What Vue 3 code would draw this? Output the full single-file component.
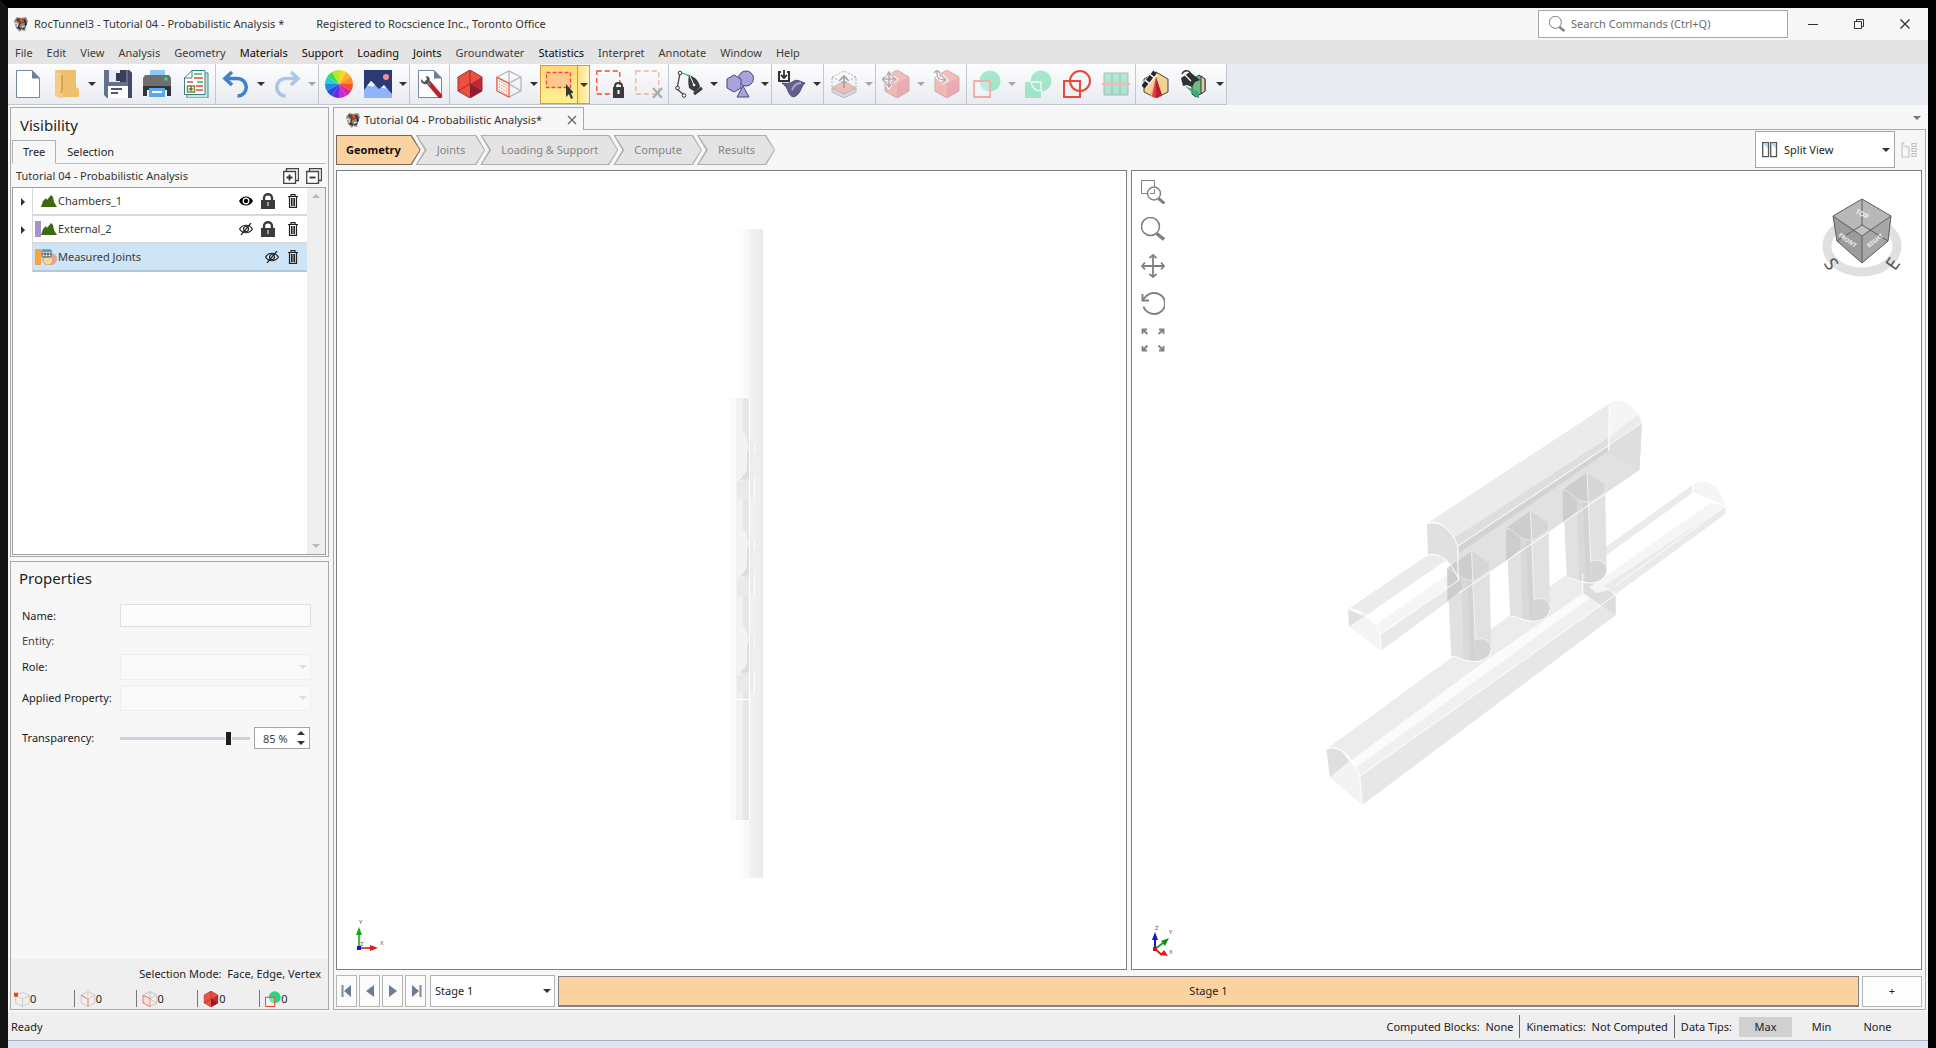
<script setup>
import { ref } from 'vue'

const menus = ['File', 'Edit', 'View', 'Analysis', 'Geometry', 'Materials', 'Support', 'Loading', 'Joints', 'Groundwater', 'Statistics', 'Interpret', 'Annotate', 'Window', 'Help']
const strongMenus = ['Materials', 'Support', 'Loading', 'Joints', 'Statistics']

const groups = [
  [{ id: 'new' }, { id: 'open', menu: true }, { id: 'save' }, { id: 'print' }, { id: 'report' }],
  [{ id: 'undo', menu: true }, { id: 'redo', menu: true, off: true }],
  [{ id: 'wheel' }, { id: 'picture', menu: true }],
  [{ id: 'settings' }],
  [{ id: 'cube' }, { id: 'wirecube', menu: true }, { id: 'select', menu: true, on: true }, { id: 'selectlock' }, { id: 'selectclear', off: true }],
  [{ id: 'polyline', menu: true }, { id: 'shapes', menu: true }],
  [{ id: 'surface', menu: true }],
  [{ id: 'extrude', menu: true, off: true }],
  [{ id: 'movecube', menu: true, off: true }, { id: 'rotatecube', off: true }],
  [{ id: 'boolean', menu: true, off: true }, { id: 'union', off: true }, { id: 'intersect' }, { id: 'divide', off: true }],
  [{ id: 'paint' }, { id: 'fill', menu: true }]
]

const tree = [
  { name: 'Chambers_1', visible: true, lock: true, expand: true, swatch: '', icon: 'mesh' },
  { name: 'External_2', visible: false, lock: true, expand: true, swatch: '#a892c6', icon: 'mesh' },
  { name: 'Measured Joints', visible: false, lock: false, expand: false, swatch: '#f5a640', icon: 'joint', selected: true }
]

const steps = ['Geometry', 'Joints', 'Loading & Support', 'Compute', 'Results']
const counters = ['c-vertex', 'c-edge', 'c-face', 'cube', 'boolean']
const players = [
  { id: 'first', label: 'First stage' },
  { id: 'prev', label: 'Previous stage' },
  { id: 'next', label: 'Next stage' },
  { id: 'last', label: 'Last stage' }
]
const viewTools = ['zoomwin', 'zoom', 'pan', 'rotate', 'fit']
const wedges = ['#ffd21f', '#ffb02e', '#ff8a2a', '#f4502c', '#e0239a', '#c02be0', '#6a2be0', '#2b48d8', '#1f8ae6', '#25d0d8', '#3ddc5a', '#b4e62a']
const wedgePath = 'M14 14 L14 0 A14 14 0 0 1 21 1.9 Z'
const columns = [
  { t: 'translate(0 0)' },
  { t: 'translate(177 -121)' },
  { t: 'translate(347 -236)' }
]
const transparency = ref(85)
const tips = ['Max', 'Min', 'None']
</script>

<template>
  <div class="desktop">
    <svg class="sprite" aria-hidden="true">
      <symbol id="new" viewBox="0 0 28 28"><path d="M2.500 .5H18l7.500 7.500v19.500h-23z" fill="#fff" stroke="#7388a5" /><path d="M18 0l8 8.500h-8z" fill="#6c7f9b" /></symbol>
      <symbol id="open" viewBox="0 0 28 28"><path d="M3 0h20v17l3 2v8H8z" fill="#efc06c" /><path d="M2 0l8 5v24l-8-3z" fill="#f4cd83" /><path d="M9 5v15l-1 3" stroke="#cf9440" stroke-width="1.500" fill="none" /></symbol>
      <symbol id="save" viewBox="0 0 28 28"><path d="M1 0h24l3 3v25H3l-3-3V0z" fill="#63718f" /><path d="M24 0h1l3 3v25h-4z" fill="#454b66" /><path d="M5 0h17v12H5z" fill="#3a3e5b" /><path d="M5 0h11v12H5z" fill="#e5eaf4" /><path d="M12 3h4v8h-4z" fill="#343955" /><path d="M4 16h20v12H4z" fill="#fff" /><path d="M7 19h11M7 23h7" stroke="#4c5675" stroke-width="2" /></symbol>
      <symbol id="print" viewBox="0 0 28 28"><path d="M7 0h15v8H7z" fill="#8ec8f8" /><path d="M2 5h24l2 3v17h-4v-7H4v7H0V8z" fill="#6f6f71" /><path d="M0 16h28v10h-4v-6H4v6H0z" fill="#343537" /><path d="M6 18h16v9H6z" fill="#58aaf0" /><path d="M9 22h10" stroke="#fff" stroke-width="2" /><circle cx="23" cy="9" r="1.800" fill="#2ddf7c" /></symbol>
      <symbol id="report" viewBox="0 0 28 28"><path d="M10 3h16v25H5V9z" fill="#bfe6e3" stroke="#3f8d91" /><path d="M10 .5h13v24H2.500V8z" fill="#fff" stroke="#3a7c84" /><path d="M2 8h8V0" fill="none" stroke="#3a7c84" /><path d="M12 4h8M15 12h6" stroke="#2dbd52" stroke-width="1.400" /><path d="M12 8h9M5 12h6M14 16h7M14 20h7" stroke="#e8443b" stroke-width="1.400" /><path d="M5.500 16h7v6h-7z" fill="#fff" stroke="#7d8b22" stroke-width="1.500" /><path d="M9 16v5M7 19h4" stroke="#334" /></symbol>
      <symbol id="undo" viewBox="0 0 28 28"><path d="M10 2L3 8.500l7 6.500M3 8.500h12.500a8.500 8.500 0 0 1 0 17.500" fill="none" stroke="#3f82c8" stroke-width="3.600" /></symbol>
      <symbol id="redo" viewBox="0 0 28 28"><path d="M18 2l7 6.500-7 6.500M25 8.500H12.500a8.500 8.500 0 0 0 0 17.500" fill="none" stroke="#3f82c8" stroke-width="3.600" /></symbol>
      <symbol id="wheel" viewBox="0 0 28 28"><path v-for="(c, i) in wedges" :key="c" :d="wedgePath" :fill="c" :transform="`rotate(${i * 30} 14 14)`" /></symbol>
      <symbol id="picture" viewBox="0 0 28 28"><path d="M0 0h28v28H0z" fill="#2c3b73" /><path d="M0 20L7 11l8 8 5-4 8 9v4H0z" fill="#90b4f8" /><path d="M3 16l4-5 4 4-3 2-1-1zM17 18l3-3 3 4-3-1z" fill="#f1f5ff" /><circle cx="22" cy="7" r="3" fill="#f48f9c" /></symbol>
      <symbol id="settings" viewBox="0 0 28 28"><path d="M2.500 .5H18l7.500 7.500v19.500h-23z" fill="#fff" stroke="#7388a5" /><path d="M18 0l8 8.500h-8z" fill="#6c7f9b" /><path d="M13 13l11 13" stroke="#b7242c" stroke-width="4.500" stroke-linecap="round" /><path d="M10 10l4 5" stroke="#777" stroke-width="3" /><path d="M5 9l3 3 3-2-1-4c4 0 5 4 2 7s-8 0-7-4z" fill="#555" /></symbol>
      <symbol id="cube" viewBox="0 0 28 28"><path d="M14 0l12 7v14l-12 7L2 21V7z" fill="#ee4f3e" /><path d="M14 14L26 7v14l-12 7z" fill="#c12a38" /><path d="M14 14L26 21 14 28z" fill="#8f1c31" /><path d="M14 0l12 7v14l-12 7L2 21V7zM14 0v14L2 21M14 14l12 7" fill="none" stroke="#8c2731" stroke-width=".9" /></symbol>
      <symbol id="wirecube" viewBox="0 0 28 28"><path d="M14 1l12 6v14l-12 6L2 21V7zM14 1v13M2 21l12-7 12 7M2 7l12 6 12-6" fill="none" stroke="#aeb1b5" stroke-width="1.200" /><path d="M2 7.500l12 6V27L2 21z" fill="#fff1ee" stroke="#ef5540" stroke-width="1.200" /><path d="M4 11l9 5M4 14l9 5M4 17l9 5M4 20l9 5" stroke="#ef5540" stroke-dasharray="1 1.600" /></symbol>
      <symbol id="select" viewBox="0 0 28 28"><path d="M1.500 1.500h24v15h-24z" fill="#ffc98c" stroke="#f24a2e" stroke-width="1.300" stroke-dasharray="4 2" /><path d="M21 13v13l3-3 2 5 2-1-2-5h3z" fill="#35363a" /></symbol>
      <symbol id="selectlock" viewBox="0 0 28 28"><path d="M.8 1h23v23H.8z" fill="none" stroke="#f24a2e" stroke-width="1.300" stroke-dasharray="5 3" /><path d="M17 17h11v11H17z" fill="#3a3b3e" /><path d="M19 18v-2c0-4 7-4 7 0v2" fill="none" stroke="#3a3b3e" stroke-width="2" /><path d="M22.500 20v4" stroke="#fff" stroke-width="2" /></symbol>
      <symbol id="selectclear" viewBox="0 0 28 28"><path d="M.8 1h23v23H.8z" fill="none" stroke="#f24a2e" stroke-width="1.300" stroke-dasharray="5 3" /><path d="M18 18l9 10M27 18l-9 10" stroke="#444" stroke-width="2.200" /></symbol>
      <symbol id="polyline" viewBox="0 0 28 28"><path d="M5 3L2 19l7 6" fill="none" stroke="#444" stroke-width="1.300" /><path d="M5 3c5 0 6 1 9 3" fill="none" stroke="#35d67f" stroke-width="1.600" /><g fill="#fff" stroke="#333"><circle cx="5" cy="3" r="1.800" /><circle cx="2.500" cy="18" r="1.800" /><circle cx="9" cy="25.500" r="1.800" /></g><path d="M14 5c6 2 10 6 11 12l-5 5-6-4c-1-5-1-8 0-13z" fill="#3a3c42" /><path d="M15 6l4 9" stroke="#fff" /><circle cx="19" cy="15" r="1.300" fill="#fff" /><path d="M19 24l8-6" stroke="#3a3c42" stroke-width="3" /></symbol>
      <symbol id="shapes" viewBox="0 0 28 28"><g fill="#a6a4da" stroke="#4a4878"><circle cx="20" cy="8.500" r="7.500" /><path d="M8 5l7 4v9l-7 4-7-4V9z" /><path d="M17 16l6 11H11z" /></g></symbol>
      <symbol id="surface" viewBox="0 0 28 28"><path d="M4 13c6 1 9 0 12-2 4-2 6 1 11 2-4 3-4 9-8 12-3 3-6 2-8-2-2-5-3-7-7-10z" fill="#62618e" stroke="#494875" /><path d="M14 20c2-5 5-7 9-7" fill="none" stroke="#aaa8d0" stroke-width="2" /><path d="M3 2H1v9h10V2H9" fill="none" stroke="#333" stroke-width="2" /><path d="M6 0v8M3 5l3 3 3-3" fill="none" stroke="#333" stroke-width="1.800" /></symbol>
      <symbol id="extrude" viewBox="0 0 28 28"><path d="M2 18l12 6 12-6v4l-12 6-12-6z" fill="#aeb4d8" stroke="#667" /><path d="M14 11l12 7-12 6-12-6z" fill="#ef6d5c" stroke="#766" /><path d="M2 17V7l12-6 12 6v10M2 7l12 6 12-6" fill="none" stroke="#444" stroke-dasharray="2 1.500" /><path d="M14 18V6M10 10l4-4 4 4" fill="none" stroke="#333" stroke-width="1.800" /></symbol>
      <symbol id="movecube" viewBox="0 0 28 28"><path d="M15 0l12 7v14l-12 7L3 21V7z" fill="#ee6558" stroke="#8a4a48" /><path d="M15 14l12-7v14l-12 7z" fill="#d4344a" opacity=".7" /><path d="M7 3v13M0 9h14M5 5l2-3 2 3M5 14l2 3 2-3M3 7L0 9l3 3M11 7l3 2-3 3" fill="none" stroke="#fff" stroke-width="3.500" /><path d="M7 3v13M0 9h14M5 5l2-3 2 3M5 14l2 3 2-3M3 7L0 9l3 3M11 7l3 2-3 3" fill="none" stroke="#444" stroke-width="1.500" /></symbol>
      <symbol id="rotatecube" viewBox="0 0 28 28"><path d="M14 0l12 7v14l-12 7L2 21V7z" fill="#ee6558" stroke="#8a4a48" /><path d="M14 14l12-7v14l-12 7z" fill="#d4344a" opacity=".7" /><path d="M4 1v3c0 5 3 6 8 6M1 3l3-3 3 3M9 6l4 4-4 3" fill="none" stroke="#fff" stroke-width="4" /><path d="M4 1v3c0 5 3 6 8 6M1 3l3-3 3 3M9 6l4 4-4 3" fill="none" stroke="#444" stroke-width="1.500" /></symbol>
      <symbol id="boolean" viewBox="0 0 28 28"><circle cx="17" cy="11" r="10.500" fill="#2bd487" /><path d="M1 11h16v16H1z" fill="#fff" fill-opacity=".35" stroke="#ee4b35" stroke-width="1.800" /></symbol>
      <symbol id="union" viewBox="0 0 28 28"><circle cx="17" cy="11" r="10.500" fill="#2bd487" /><path d="M1 12h16v16H1z" fill="#2bd487" /><path d="M17 21V12H7a10 10 0 0 0 10 9z" fill="none" stroke="#fff" stroke-width="1.400" /></symbol>
      <symbol id="intersect" viewBox="0 0 28 28"><circle cx="17" cy="11" r="10" fill="none" stroke="#e8483a" stroke-width="2" /><path d="M1 11h16v16H1z" fill="none" stroke="#e8483a" stroke-width="2" /></symbol>
      <symbol id="divide" viewBox="0 0 28 28"><path d="M2 3h24v22H2z" fill="#45d894" stroke="#557" /><path d="M10 3v22M18 3v22" stroke="#557" /><path d="M0 14h28" stroke="#ef6650" stroke-width="2.600" /></symbol>
      <symbol id="paint" viewBox="0 0 28 28"><path d="M14 2l12 7v13l-12 6-12-6V9z" fill="#f3d292" stroke="#444" /><path d="M14 7l-6 18 6 3z" fill="#f2b0a0" /><path d="M14 7l-4 19 4 2 6-2z" fill="#ef3a34" /><path d="M14 7l6 18-6 3z" fill="#b81f30" /><path d="M2 16L13 3" stroke="#fff" stroke-width="6" /><path d="M1 17L13 2" stroke="#26272a" stroke-width="4.500" stroke-dasharray="6 1.500" /></symbol>
      <symbol id="fill" viewBox="3 0 28 28"><path d="M14 10l7-5 6 4v12l-9 6-4-3z" fill="#6fb984" stroke="#333" /><path d="M23 6l4 3v12l-4 3z" fill="#dcd0a4" stroke="#333" /><path d="M7 16l14 6v7z" fill="#3aad7b" /><path d="M3 8l9-6 10 8-5 2-3 5-5-2-4 1z" fill="#303133" /><path d="M4 4c2-5 8-4 9 1" fill="none" stroke="#333" stroke-width="1.500" /><path d="M7 5l6 6" stroke="#fff" stroke-width="1.200" /></symbol>

      <symbol id="logo" viewBox="0 0 16 16"><path d="M1 5l3-4 4 1 5-1 2 4-2 5-1 5-4-1-1 2-4-4-1-4z" fill="#8d8a86" /><path d="M4 3l3 3-2 5 3 2M11 3l2 5-3 5" stroke="#33302e" stroke-width="2" fill="none" /><path d="M2 7l3 1-1 3M9 11l3-1" stroke="#dad8d6" stroke-width="1.500" fill="none" /><path d="M6 2l4 1 1 4-4 1-2-2z" fill="#a63b1c" /><path d="M7 3l2 1v2" stroke="#e57a4c" fill="none" /></symbol>
      <symbol id="mesh" viewBox="0 0 16 12"><path d="M0 12L2 6l3-3 1 2 4-5 2 2 1 5 3 5z" fill="#3b6a12" /></symbol>
      <symbol id="joint" viewBox="0 0 16 16"><circle cx="10" cy="10" r="6" fill="#e6a0a6" /><circle cx="7" cy="11" r="5" fill="#f1d6a0" stroke="#c9a46d" /><path d="M1 1h9v7H1z" fill="#fff" stroke="#555" /><path d="M1 1h9v2H1z" fill="#4e9edb" /><path d="M1 5h9M4 3v5M7 3v5" stroke="#444" /></symbol>
      <symbol id="eye" viewBox="0 0 14 10"><path d="M0 5c3-6 11-6 14 0-3 6-11 6-14 0z" fill="#000" /><circle cx="7" cy="5" r="3.400" fill="#fff" /><circle cx="7" cy="5" r="2.200" fill="#000" /></symbol>
      <symbol id="eyeoff" viewBox="0 0 14 12"><path d="M.6 6c3-5 10-5 12.800 0-3 5-10 5-12.800 0z" fill="none" stroke="#222" stroke-width="1.200" /><circle cx="7" cy="6" r="2.500" fill="none" stroke="#222" stroke-width="1.200" /><path d="M2 12L12 0" stroke="#222" stroke-width="1.200" /></symbol>
      <symbol id="lock" viewBox="0 0 14 16"><path d="M0 7h14v9H0z" fill="#3b3b3b" /><path d="M3 8V5c0-5 8-5 8 0v3" fill="none" stroke="#3b3b3b" stroke-width="2.400" /><path d="M7 9v4" stroke="#bbb" stroke-width="1.600" /></symbol>
      <symbol id="trash" viewBox="0 0 10 14"><path d="M1.500 3v10.400h7V3M0 2.500h10M3 2V.6h4V2" fill="none" stroke="#222" stroke-width="1.200" /><path d="M3.500 4v8M5 4v8M6.500 4v8" stroke="#222" stroke-width="1.100" /></symbol>
      <symbol id="expandall" viewBox="0 0 16 16"><path d="M3.500 3V.7h12v11.800H13" fill="none" stroke="#444" stroke-width="1.300" /><path d="M.7 3.500h11.800v12H.7z" fill="#fff" stroke="#444" stroke-width="1.300" /><path d="M3.500 9.500h6M6.500 6.500v6" stroke="#333" stroke-width="1.800" /></symbol>
      <symbol id="collapseall" viewBox="0 0 16 16"><path d="M3.500 3V.7h12v11.800H13" fill="none" stroke="#444" stroke-width="1.300" /><path d="M.7 3.500h11.800v12H.7z" fill="#fff" stroke="#444" stroke-width="1.300" /><path d="M3.500 9.500h6" stroke="#333" stroke-width="1.800" /></symbol>
      <symbol id="c-vertex" viewBox="0 0 28 28"><path d="M15 2l12 6v13l-12 6L3 21V8zM15 27V14L3 8M15 14l12-6" fill="none" stroke="#c6c6c6" stroke-width="1.500" /><path d="M0 3h7v7H0z" fill="#f04418" /></symbol>
      <symbol id="c-edge" viewBox="0 0 28 28"><path d="M14 1l12 6v14l-12 6L2 21V7zM14 1v8M14 14l12-7" fill="none" stroke="#c6c6c6" stroke-width="1.500" /><path d="M2 7l12 7v13" fill="none" stroke="#f0876e" stroke-width="2" /></symbol>
      <symbol id="c-face" viewBox="0 0 28 28"><use href="#wirecube" /></symbol>
      <symbol id="first" viewBox="0 0 12 12"><path d="M1.500 0v12" stroke="#7a8ba0" stroke-width="2" /><path d="M10 0v12L3 6z" fill="#6b7d93" /></symbol>
      <symbol id="prev" viewBox="0 0 12 12"><path d="M10 0v12L2 6z" fill="#6b7d93" /></symbol>
      <symbol id="next" viewBox="0 0 12 12"><path d="M2 0v12l8-6z" fill="#6b7d93" /></symbol>
      <symbol id="last" viewBox="0 0 12 12"><path d="M2 0v12l7-6z" fill="#6b7d93" /><path d="M10.500 0v12" stroke="#7a8ba0" stroke-width="2" /></symbol>
      <symbol id="zoomwin" viewBox="0 0 24 24"><path d="M7 13.500H.5V.5h13V7M9 13.500h4.500V9" fill="none" stroke="#808080" /><circle cx="13" cy="13.500" r="6.500" fill="none" stroke="#808080" stroke-width="1.400" /><path d="M17.500 18.500l6 5" stroke="#808080" stroke-width="3" /></symbol>
      <symbol id="zoom" viewBox="0 0 24 24"><circle cx="9.500" cy="9.500" r="9" fill="none" stroke="#808080" stroke-width="1.500" /><path d="M15.500 16.500l7.500 6" stroke="#808080" stroke-width="3.500" /></symbol>
      <symbol id="pan" viewBox="0 0 24 24"><path d="M12 1v22M1 12h22M8.500 4L12 1l3.500 3M8.500 20l3.500 3 3.500-3M4 8.500L1 12l3 3.500M20 8.500l3 3.500-3 3.500" fill="none" stroke="#808080" stroke-width="1.800" /></symbol>
      <symbol id="rotate" viewBox="0 0 24 24"><path d="M2.500 15.500A11 10.500 0 1 0 4 6.500L1.500 9" fill="none" stroke="#808080" stroke-width="1.900" /><path d="M1.500 3v6.500H8" fill="none" stroke="#808080" stroke-width="1.900" /></symbol>
      <symbol id="fit" viewBox="0 0 24 24"><g fill="none" stroke="#808080" stroke-width="1.800"><path d="M1.500 6V1.500H6M2 2l4.500 4" /><path d="M18 1.500h4.500V6M22 2l-4.500 4" /><path d="M1.500 18v4.500H6M2 22l4.500-4.500" /><path d="M18 22.500h4.500V18M22 22l-4.500-4.500" /></g></symbol>
    </svg>

    <main class="window">
      <header class="title">
        <svg class="i16"><use href="#logo" /></svg>
        <h1>RocTunnel3 - Tutorial 04 - Probabilistic Analysis *</h1>
        <span class="registered">Registered to Rocscience Inc., Toronto Office</span>
        <label class="search">
          <svg class="i16"><use href="#zoom" /></svg>
          <input type="text" placeholder="Search Commands (Ctrl+Q)" aria-label="Search Commands">
        </label>
        <button class="win" aria-label="Minimize"><svg width="12" height="12"><path d="M1 6.500h10" stroke="#333" /></svg></button>
        <button class="win" aria-label="Restore"><svg width="12" height="12"><path d="M1.500 3.500h7v7h-7zM3.500 3.500v-2h7v7h-2" fill="none" stroke="#333" /></svg></button>
        <button class="win" aria-label="Close"><svg width="12" height="12"><path d="M1.500 1.500l9 9M10.500 1.500l-9 9" stroke="#333" stroke-width="1.400" /></svg></button>
      </header>

      <nav class="menubar">
        <button v-for="m in menus" :key="m" :class="{ strong: strongMenus.includes(m) }">{{ m }}</button>
      </nav>

      <div class="toolbar" role="toolbar" aria-label="Main tools">
        <div v-for="(g, gi) in groups" :key="gi" class="group">
          <div v-for="t in g" :key="t.id" class="tool" :class="{ on: t.on, off: t.off }">
            <button class="tbtn" :aria-label="t.id"><svg class="i28"><use :href="'#' + t.id" /></svg></button>
            <button v-if="t.menu" class="drop" :aria-label="t.id + ' options'"><i class="caret"></i></button>
          </div>
        </div>
      </div>

      <div class="work">
        <aside class="side">
          <section class="panel visibility">
            <h2>Visibility</h2>
            <div class="tabs"><button class="tab current">Tree</button><button class="tab">Selection</button></div>
            <div class="treehead">
              <span>Tutorial 04 - Probabilistic Analysis</span>
              <button aria-label="Expand all"><svg class="i16"><use href="#expandall" /></svg></button>
              <button aria-label="Collapse all"><svg class="i16"><use href="#collapseall" /></svg></button>
            </div>
            <div class="treebox">
              <ul>
                <li v-for="n in tree" :key="n.name">
                  <button class="twist" :aria-label="'Expand ' + n.name"><svg v-if="n.expand" width="4" height="8"><path d="M0 0l4 4-4 4z" fill="#333" /></svg></button>
                  <div class="node" :class="{ picked: n.selected }">
                    <i class="swatch" :style="{ background: n.swatch }"></i>
                    <svg class="i16 nodeicon"><use :href="'#' + n.icon" /></svg>
                    <span>{{ n.name }}</span>
                    <button aria-label="Toggle visibility"><svg class="eye"><use :href="n.visible ? '#eye' : '#eyeoff'" /></svg></button>
                    <button v-if="n.lock" class="locker" aria-label="Lock"><svg class="i16"><use href="#lock" /></svg></button>
                    <button class="bin" aria-label="Delete"><svg class="i14"><use href="#trash" /></svg></button>
                  </div>
                </li>
              </ul>
              <div class="scroll"><i class="caret up"></i><i class="caret"></i></div>
            </div>
          </section>

          <section class="panel properties">
            <h2>Properties</h2>
            <form @submit.prevent>
              <label for="p-name">Name:</label><input id="p-name" type="text" disabled>
              <span class="entity">Entity:</span><span></span>
              <label for="p-role">Role:</label><span class="combo"><select id="p-role" disabled></select><i class="caret"></i></span>
              <label for="p-prop">Applied Property:</label><span class="combo"><select id="p-prop" disabled></select><i class="caret"></i></span>
              <label for="p-trans" class="tall">Transparency:</label>
              <span class="range tall">
                <input id="p-trans" v-model="transparency" type="range" min="0" max="100">
                <span class="spin">
                  <input type="text" :value="transparency + ' %'" aria-label="Transparency percent">
                  <span class="arrows"><i class="caret up"></i><i class="caret"></i></span>
                </span>
              </span>
            </form>
            <footer class="mode">
              <p>Selection Mode:&nbsp; Face, Edge, Vertex</p>
              <div class="counters"><span v-for="c in counters" :key="c"><svg class="i16"><use :href="'#' + c" /></svg>0</span></div>
            </footer>
          </section>
        </aside>

        <section class="doc">
          <div class="doctabs">
            <div class="doctab">
              <svg class="i16"><use href="#logo" /></svg><span>Tutorial 04 - Probabilistic Analysis*</span>
              <button aria-label="Close tab"><svg width="10" height="10"><path d="M1 1l8 8M9 1L1 9" stroke="#666" stroke-width="1.300" /></svg></button>
            </div>
            <div class="docrest"><i class="caret"></i></div>
          </div>
          <div class="docbody">
            <div class="flow">
              <ol>
                <li v-for="(s, i) in steps" :key="s"><button :class="{ active: i === 0 }"><span>{{ s }}</span></button></li>
              </ol>
              <label class="split">
                <svg width="16" height="16" viewBox="0 0 16 16"><path d="M.7 .7h5.800v14H.7zM8.700 .7h5.800v14H8.700z" fill="#fff" stroke="#555" stroke-width="1.300" /><path d="M1.500 1.500h4.500v5zM9.500 1.500H14v5z" fill="#a9d5f0" /></svg>
                <select aria-label="View layout"><option>Split View</option></select><i class="caret"></i>
              </label>
              <button class="layout" aria-label="Layout options"><svg width="16" height="16" viewBox="0 0 16 16"><path d="M1 5v10h7V5H5M1 1v3h5M3 0L1 2M11 1.500h4v3h-4zM11 6.500h4v3h-4zM11 11.500h4v3h-4z" fill="none" stroke="#c3c3c3" stroke-width="1.200" /></svg></button>
            </div>

            <div class="views">
              <div class="view">
                <svg class="scene" viewBox="0 0 790 798">
                  <g shape-rendering="crispEdges">
                    <path d="M403 58h5v649h-5z" fill="#fcfcfc" /><path d="M408 58h5v649h-5z" fill="#f8f8f8" /><path d="M413 58h6v649h-6z" fill="#f1f1f1" /><path d="M419 58h5v649h-5z" fill="#eeeeee" /><path d="M424 58h3v649h-3z" fill="#eaeaea" />
                    <path d="M393 227h7v422h-7z" fill="#fafafa" /><path d="M400 227h7v422h-7z" fill="#f1f1f1" /><path d="M407 227h6v422h-6z" fill="#e6e6e6" />
                    <g v-for="y in [262, 359, 456]" :key="y"><path :d="`M401 ${y}h7c5 8 5 32 1 40l-8 8z`" fill="#f3f3f3" /><path :d="`M411 ${y + 18}v20l-8 9 8 -2h2v-27z`" fill="#dddddd" /><path :d="`M401 ${y + 48}h12v18h-12z`" fill="#eaeaea" /><path :d="`M413 ${y}l5 14v50h-5z`" fill="#ededed" /><path :d="`M418 ${y + 11}v8M418 ${y + 44}v22`" stroke="#fff" /></g>
                    <path d="M393 529h20M413.500 227v422M393 226.500h20M393 649.500h20" stroke="#fff" fill="none" />
                  </g>
                </svg>
                <svg class="triad" width="40" height="40" viewBox="0 0 40 40"><path d="M6 33V15" stroke="#1aa51f" stroke-width="1.600" /><path d="M6 11l3 8H3z" fill="#15a51a" /><path d="M6 32h13" stroke="#e01b1b" stroke-width="1.600" /><path d="M25 32l-8-3v6z" fill="#e01b1b" /><path d="M4 30h4v4H4z" fill="#1414d2" /><g font-size="6" fill="#555"><text x="6" y="8">Y</text><text x="27" y="29">X</text><text x="7" y="30">Z</text></g></svg>
              </div>
              <div class="view">
                <svg class="scene" viewBox="0 0 790 798">
                  <g transform="translate(168 209) scale(.33333)" stroke-width="3">
                    <path d="M382 430L930 70 928 195 475 495C450 445 415 420 382 430z" fill="#ebebeb" />
                    <path d="M930 70C970 45 1005 75 1028 128L928 195z" fill="#f5f5f5" />
                    <path d="M463 474L928 172V205L475 510z" fill="#dedede" />
                    <path d="M928 172L1018 102 1028 128 928 200z" fill="#ebebeb" />
                    <path d="M475 498L1028 128 1020 272 478 640z" fill="#e1e1e1" />
                    <path d="M475 498L925 200V215L478 520z" fill="#d3d3d3" />
                    <path d="M925 215L930 190 1028 128 1020 272z" fill="#dedede" />
                    <path d="M382 432C420 420 455 450 475 498L478 600C460 545 425 515 385 525z" fill="#e0e0e0" />
                    <path d="M145 688L385 525C400 522 425 525 440 540L195 710C180 695 165 684 145 688z" fill="#ebebeb" />
                    <path d="M240 765L445 625 478 600V640L245 812z" fill="#e9e9e9" />
                    <path d="M222 738L460 573 478 600 240 765z" fill="#f5f5f5" />
                    <path d="M145 688L195 710 148 740z" fill="#e0e0e0" /><path d="M148 740L195 710C220 725 235 745 240 765L245 812z" fill="#f4f4f4" />
                    <path d="M80 1108L460 830 800 585 850 580 950 650V705L188 1275 180 1190C155 1130 120 1090 80 1108z" fill="#ececec" />
                    <path d="M150 1145L520 870 850 640 890 620 905 632 165 1168z" fill="#fbfbfb" />
                    <path d="M167 1165L905 630 925 620 948 645 180 1190z" fill="#f0f0f0" />
                    <path d="M180 1190L948 645V705L188 1275z" fill="#e7e7e7" />
                    <path d="M850 580L948 645V705L850 638z" fill="#dddddd" />
                    <path d="M80 1108C120 1095 130 1120 150 1145L90 1193z" fill="#dfdfdf" /><path d="M90 1193L150 1145C165 1160 175 1175 180 1190L188 1275z" fill="#f3f3f3" />
                    <path d="M852 548L1180 315V338L852 575z" fill="#ebebeb" />
                    <path d="M870 622L1235 368 1278 378 950 625 890 640z" fill="#f5f5f5" />
                    <path d="M915 618L1278 378V402L950 642z" fill="#eaeaea" />
                    <path d="M1180 315C1220 285 1265 320 1278 378L1180 335z" fill="#f5f5f5" />
                    <g v-for="c in columns" :key="c.t" :transform="c.t">
                      <path d="M443 565L516 513 570 550 575 815C560 845 520 850 490 838L455 830z" fill="#e1e1e1" />
                      <path d="M443 565L516 513 520 600 443 665z" fill="#cdcdcd" />
                      <path d="M516 513L570 550V570L520 602z" fill="#d6d6d6" />
                      <path d="M485 595L503 600 512 842 492 838z" fill="#d9d9d9" />
                      <path d="M503 600L520 602 527 845 512 842z" fill="#d3d3d3" />
                      <path d="M527 780C560 765 575 790 575 815 560 845 540 845 527 845z" fill="#d5d5d5" />
                      <path d="M516 513L527 780C555 768 575 785 575 805" fill="none" stroke="#f1f1f1" />
                      <path d="M443 565C470 570 475 600 520 602 550 600 575 580 570 550" fill="none" stroke="#e6e6e6" />
                      <path d="M455 830C480 828 485 845 530 845 560 842 575 825 575 808" fill="none" stroke="#fff" />
                    </g>
                    <g fill="none" stroke="#fff"><path d="M382 430C420 415 455 450 475 498V570L478 600C455 545 420 515 385 525M475 498L1028 128M930 70L928 212M478 640L1020 272M145 688C185 682 235 725 240 765L245 812M240 765L478 600M80 1108C120 1090 165 1140 180 1190L188 1275M180 1190L948 645M850 580V640M1180 315V335M950 615L1278 378" /></g>
                  </g>
                </svg>
                <div class="viewtools"><button v-for="v in viewTools" :key="v" :aria-label="v"><svg class="i24"><use :href="'#' + v" /></svg></button></div>
                <svg class="compass" width="82" height="82" viewBox="0 0 82 82">
                  <ellipse cx="41" cy="48" rx="35" ry="26" fill="none" stroke="#e0e0e0" stroke-width="9" />
                  <path d="M41 1L70 18 67 43 41 65 16 43 12 18z" fill="#a4a4a4" />
                  <path d="M41 1L70 18 41 38 12 18z" fill="#b8b8b8" />
                  <path d="M12 18L41 38V65L16 43z" fill="#9c9c9c" /><path d="M41 38L70 18 67 43 41 65z" fill="#a6a6a6" />
                  <path d="M41 27l7 5-7 6-7-6z" fill="#c2c2c2" />
                  <path d="M41 1L70 18 67 43 41 65 16 43 12 18zM12 18L41 38 70 18M41 38V65M41 1V27M16 43L41 27 67 43" fill="none" stroke="#5f5f5f" />
                  <g fill="#eee" font-size="7" font-weight="700"><text transform="translate(34 15) rotate(28)">TOP</text><text transform="translate(17 38) rotate(36)" font-size="6">FRONT</text><text transform="translate(48 50) rotate(-38)" font-size="6">RIGHT</text></g>
                  <g fill="#555" font-size="18" text-anchor="middle"><text transform="translate(10 66) rotate(55) translate(0 6)">S</text><text transform="translate(72 66) rotate(-55) translate(0 6)">E</text></g>
                </svg>
                <svg class="triad" width="40" height="40" viewBox="0 0 40 40"><path d="M7 33V22" stroke="#1414d2" stroke-width="2" /><path d="M7 16l3 8H4z" fill="#1414d2" /><path d="M7 33l8-6" stroke="#1aa51f" stroke-width="2" /><path d="M21 22l-4 8-4-5z" fill="#158a1a" /><path d="M7 33l7 6" stroke="#e01b1b" stroke-width="2" /><path d="M20 40l-8-1 4-5z" fill="#e01b1b" /><path d="M5 31h4v4H5z" fill="#c11" /><g font-size="6" fill="#555"><text x="7" y="14">Z</text><text x="21" y="18">Y</text><text x="21" y="38">X</text></g></svg>
              </div>
            </div>

            <div class="stages">
              <button v-for="p in players" :key="p.id" class="player" :aria-label="p.label"><svg class="i12"><use :href="'#' + p.id" /></svg></button>
              <span class="combo stagepick"><select aria-label="Stage"><option>Stage 1</option></select><i class="caret"></i></span>
              <button class="stage">Stage 1</button>
              <button class="add" aria-label="Add stage">+</button>
            </div>
          </div>
        </section>
      </div>

      <footer class="status">
        <span class="ready">Ready</span>
        <span>Computed Blocks:&nbsp; None</span><i class="bar"></i>
        <span>Kinematics:&nbsp; Not Computed</span><i class="bar"></i>
        <span class="tipslabel">Data Tips:</span>
        <button v-for="t in tips" :key="t" :class="{ chosen: t === 'Max' }">{{ t }}</button>
      </footer>
    </main>
    <div class="taskbar"></div>
  </div>
</template>

<style>
body { background: #000; }
</style>

<style scoped>
* { box-sizing: border-box; }
.desktop { min-height: 100vh; display: flex; flex-direction: column; border-left: 8px solid #141414; border-right: 8px solid #000; border-top: 8px solid #000; font: 11px/16px "Noto Sans", "Open Sans", sans-serif; color: #1e1e1e; }
.sprite { position: absolute; width: 0; height: 0; }
button, input, select { font: inherit; color: inherit; margin: 0; padding: 0; border: 0; background: none; border-radius: 0; outline: 0; }
button { display: inline-flex; align-items: center; justify-content: center; }
select { appearance: none; opacity: 1; }
svg { display: block; flex: none; }
ul, ol { list-style: none; margin: 0; padding: 0; }
h1, h2, p { margin: 0; font-weight: 400; }
.i12 { width: 12px; height: 12px; }
.i14 { width: 14px; height: 14px; }
.i16 { width: 16px; height: 16px; }
.i24 { width: 24px; height: 24px; }
.i28 { width: 28px; height: 28px; }
.eye { width: 14px; height: 12px; }
.caret { display: block; flex: none; width: 0; height: 0; border: 4px solid transparent; border-top-color: #333; border-bottom: 0; }
.caret.up { transform: rotate(180deg); }

.window { flex: 1; display: flex; flex-direction: column; background: #f7f7f7; }
.title { display: flex; align-items: center; height: 32px; padding-left: 5px; }
.title h1 { font-size: 11px; margin-left: 5px; color: #333; }
.registered { margin-left: 32px; color: #333; }
.search { display: flex; align-items: center; gap: 6px; width: 250px; height: 28px; margin: 0 2px 0 auto; padding-left: 10px; border: 1px solid #a5a5a5; background: #fff; }
.search input { flex: 1; min-width: 0; }
.search input::placeholder { color: #6b6b6b; opacity: 1; }
.win { width: 46px; height: 32px; }
.menubar { display: flex; gap: 14px; height: 24px; padding: 2px 0 0 7px; background: #e4e4e4; color: #3c3c3c; }
.menubar .strong { color: #0a0a0a; }
.toolbar { display: flex; height: 41px; background: #e8ebf1; }
.group { display: flex; border-right: 1px solid #c3c7ce; border-bottom: 1px solid #c0c4cb; background: linear-gradient(#fdfdfe, #e8ebf0); }
.tool { display: flex; }
.tbtn { width: 39px; }
.drop { width: 12px; }
.off svg, .off .caret { opacity: .4; }
.on { height: 39px; margin-top: 1px; border: 1px solid #c9a13b; background: linear-gradient(#ffd97c, #ffe98c 60%, #fff08a); }
.on .tbtn { width: 36px; }
.on .drop { border-left: 1px solid #c9a13b; background: linear-gradient(90deg, #ffe07c, #fff4c8); }

.work { flex: 1; display: flex; gap: 4px; padding: 2px; }
.side { width: 319px; flex: none; display: flex; flex-direction: column; gap: 4px; }
.panel { border: 1px solid #a9a9a9; display: flex; flex-direction: column; }
.panel h2 { font-size: 15px; line-height: 20px; padding: 7px 8px 5px; color: #222; }
.visibility { flex: 1; padding: 0 2px 1px 1px; }
.properties { flex: 1; }
.panel.properties h2 { padding: 6px 8px; }
.tabs { display: flex; height: 24px; border-bottom: 1px solid #bdbdbd; }
.tab { padding: 0 11px; }
.tab.current { height: 24px; padding: 0 10px; border: 1px solid #b0b0b0; border-bottom-color: #f7f7f7; }
.treehead { display: flex; align-items: center; gap: 7px; height: 23px; padding: 0 4px; color: #333; }
.treehead span { flex: 1; }
.treebox { flex: 1; display: flex; border: 1px solid #a0a0a0; background: #fff; }
.treebox ul { flex: 1; }
.treebox li { display: flex; height: 28px; }
.twist { width: 19px; }
.node { flex: 1; display: flex; align-items: center; border-bottom: 2px solid #d9d9d9; border-left: 1px solid #d9d9d9; color: #3a3a3a; }
.node.picked { background: #cde5f7; border-bottom-color: #b3c9da; }
.node span { flex: 1; padding-left: 1px; }
.node button { width: 22px; height: 20px; }
.node .locker { margin-right: 4px; }
.node .bin { width: 20px; margin-right: 4px; }
.swatch { width: 6px; height: 16px; margin-left: 2px; }
.scroll { width: 18px; padding: 6px 5px; background: #efefef; display: flex; flex-direction: column; justify-content: space-between; }
.scroll .caret { border-top-color: #b9b9b9; }

form { flex: 1; display: grid; grid-template-columns: 98px 191px; grid-template-rows: 23px 27px 26px 5px 26px 16px 22px; align-items: center; align-content: start; padding: 10px 11px; white-space: nowrap; }
form label { color: #1a1a1a; }
form input[type=text] { height: 23px; border: 1px solid #dfdfdf; background: #fbfbfb; }
.entity { color: #444; }
form label[for=p-prop], form label[for=p-prop] + .combo { grid-row: 5; }
form .tall { grid-row: 7; }
.combo { display: flex; align-items: center; position: relative; height: 26px; }
.combo select { width: 100%; height: 100%; border: 1px solid #eee; background: #f9f9f9; }
.combo .caret { position: absolute; right: 4px; border-top-color: #ddd; }
.range { display: flex; align-items: center; gap: 4px; }
.range input[type=range] { appearance: none; width: 130px; height: 14px; margin: 0; background: linear-gradient(#cfcfe0, #cfcfe0) center / 100% 3px no-repeat; }
.range input[type=range]::-webkit-slider-thumb { appearance: none; width: 7px; height: 13px; background: #1c1c1c; border: 1px solid #f7f7f7; border-width: 0 1px; }
.spin { display: flex; width: 56px; height: 22px; border: 1px solid #a5a5a5; background: #fff; }
.spin input[type=text] { width: 42px; height: 20px; border: 0; background: none; padding-left: 8px; color: #444; }
.arrows { display: flex; flex-direction: column; gap: 6px; justify-content: center; }
.mode { height: 50px; padding: 7px 7px 0; background: #efefef; }
.mode p { text-align: right; }
.counters { display: flex; margin-left: -6px; padding-top: 8px; }
.counters span { width: 64px; display: flex; align-items: center; padding-left: 2px; height: 17px; }
.counters span + span { border-left: 1px solid #777; padding-left: 5px; }

.doc { flex: 1; min-width: 0; display: flex; flex-direction: column; }
.doctabs { display: flex; height: 23px; }
.doctab { display: flex; align-items: center; width: 251px; padding: 1px 6px 0 11px; border: 1px solid #a9a9a9; border-bottom: 0; color: #333; }
.doctab span { flex: 1; padding-left: 3px; }
.docrest { flex: 1; display: flex; align-items: center; justify-content: flex-end; padding-right: 5px; border-bottom: 1px solid #a9a9a9; }
.docrest .caret { border-top-color: #777; }
.docbody { flex: 1; display: flex; flex-direction: column; padding: 0 3px 2px 2px; border: 1px solid #a9a9a9; border-top: 0; }
.flow { display: flex; align-items: center; height: 40px; }
.flow ol { display: flex; flex: 1; }
.flow li + li { margin-left: -5px; }
.flow li button { position: relative; height: 30px; padding: 0 20px 0 21px; background: #adadad; color: #858585; clip-path: polygon(0 0, calc(100% - 9px) 0, 100% 50%, calc(100% - 9px) 100%, 0 100%, 9px 50%); }
.flow li button::before { content: ""; position: absolute; inset: 1px; background: #e4e4e4; clip-path: polygon(1px 0, calc(100% - 9px) 0, 100% 50%, calc(100% - 9px) 100%, 1px 100%, 10px 50%); }
.flow li span { position: relative; }
.flow li .active { padding-left: 10px; font-weight: 700; color: #111; background: #77695a; clip-path: polygon(0 0, calc(100% - 9px) 0, 100% 50%, calc(100% - 9px) 100%, 0 100%); }
.flow li .active::before { background: #fbd3a1; clip-path: polygon(0 0, calc(100% - 9px) 0, 100% 50%, calc(100% - 9px) 100%, 0 100%); }
.split { display: flex; align-items: center; width: 140px; height: 37px; margin-bottom: 2px; padding: 1px 4px 0 6px; border: 1px solid #a5a5a5; background: #fff; }
.split select { flex: 1; padding-left: 6px; }
.layout { width: 27px; }
.views { flex: 1; display: flex; gap: 4px; }
.view { flex: 1; position: relative; border: 1px solid #7f7f7f; background: #fff; }
.scene { position: absolute; inset: 0; width: 100%; height: 100%; }
.viewtools { position: absolute; left: 9px; top: 9px; display: flex; flex-direction: column; gap: 13px; }
.compass { position: absolute; right: 18px; top: 27px; }
.triad { position: absolute; left: 16px; bottom: 13px; }
.stages { display: flex; align-items: center; gap: 2px; padding-top: 5px; height: 37px; }
.player { width: 21px; height: 32px; border: 1px solid #b5b5b5; background: #fbfbfb; }
.stagepick { width: 125px; height: 32px; margin: 0 1px 0 2px; }
.stagepick select { border-color: #b0b0b0; background: #fff; padding-left: 4px; }
.stagepick .caret { border-top-color: #333; }
.stage { flex: 1; height: 31px; border: 1px solid #808080; border-bottom-width: 2px; background: #fbd3a1; }
.add { width: 60px; height: 31px; margin-left: 1px; border: 1px solid #b5b5b5; background: #fdfdfd; }

.status { display: flex; align-items: center; height: 29px; padding: 1px 21px 0 3px; background: #efefef; border-bottom: 1px solid #aab0bd; color: #222; }
.ready { flex: 1; }
.bar { width: 1px; height: 23px; margin: 0 6px; background: #666; }
.tipslabel { margin-right: 7px; }
.status button { width: 53px; height: 20px; margin-right: 3px; }
.status .chosen { background: #d0d0d0; }
.taskbar { height: 7px; background: #dfe5f1; }
</style>
